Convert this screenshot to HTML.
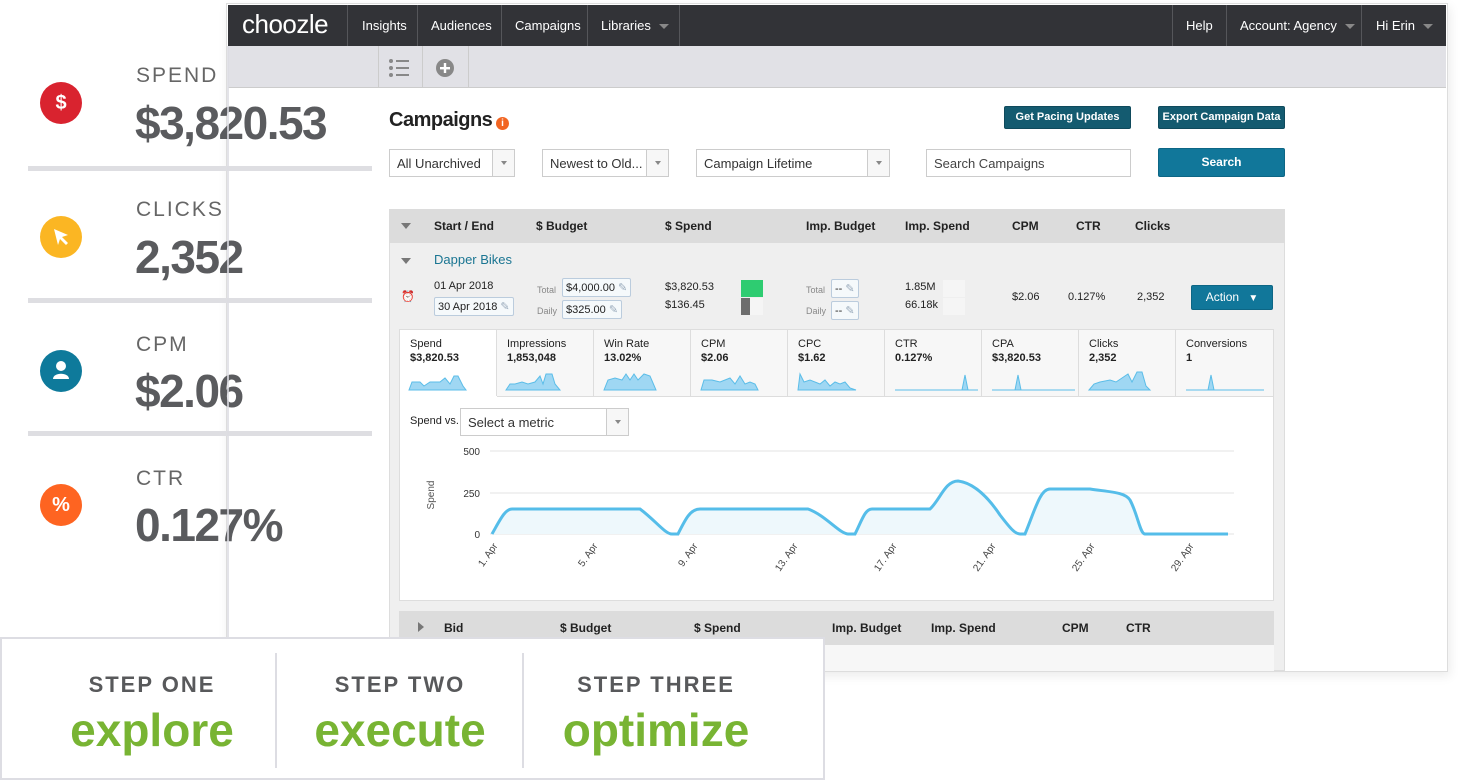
<!DOCTYPE html>
<html><head><meta charset="utf-8"><style>
*{margin:0;padding:0;box-sizing:border-box}
body{width:1458px;height:781px;background:#fff;position:relative;overflow:hidden;font-family:"Liberation Sans",sans-serif;color:#333}
.a{position:absolute}
.nav{left:228px;top:5px;width:1218px;height:41px;background:#323337;color:#fff;font-size:13px}
.nav .d{position:absolute;top:0;width:1px;height:41px;background:#55565a}
.nav span{position:absolute;top:13px}
.caret{display:inline-block;width:0;height:0;border-left:5px solid transparent;border-right:5px solid transparent;border-top:5px solid #888;vertical-align:middle;margin-left:8px}
.sel{position:absolute;top:149px;height:28px;border:1px solid #ccc;background:#fff;font-size:13px;padding:6px 7px;color:#333}
.sel i{position:absolute;right:0;top:0;width:22px;height:26px;border-left:1px solid #ccc;background:#f7f7f7}
.sel i:after{content:"";position:absolute;left:8px;top:11px;border-left:3px solid transparent;border-right:3px solid transparent;border-top:4px solid #888}
.btn{position:absolute;background:#145b70;color:#fff;font-size:11px;font-weight:bold;text-align:center;border-radius:2px;border:1px solid #0f4a5c}
.th{font-size:12px;font-weight:bold;color:#222;position:absolute}
.tri{position:absolute;width:0;height:0;border-left:5px solid transparent;border-right:5px solid transparent;border-top:6px solid #777}
.sm{font-size:11px;color:#222;position:absolute}
.tile{position:absolute;top:330px;width:97px;height:66px;background:#f7f7f7;border-right:1px solid #ddd;font-size:11px;color:#222;padding:8px 10px}
.tile b{display:block;margin-top:2px}
.lab{position:absolute;left:136px;font-size:21px;letter-spacing:2px;color:#666}
.val{position:absolute;left:135px;font-size:46px;font-weight:bold;color:#5a5b5e;letter-spacing:-1.5px}
.hr{position:absolute;left:28px;width:344px;height:5px;background:#dedee2}
.ic{position:absolute;left:40px;width:42px;height:42px;border-radius:50%;color:#fff;text-align:center;font-weight:bold}
.step{position:absolute;top:672px;width:230px;text-align:center;font-size:22px;font-weight:bold;letter-spacing:2px;color:#58595b}
.big{position:absolute;top:703px;width:250px;text-align:center;font-size:46px;font-weight:bold;color:#78b433}
</style></head><body>
<div class="a" style="left:226px;top:3px;width:1222px;height:669px;border:1px solid #ddd;box-shadow:2px 4px 10px rgba(0,0,0,.08);background:#fff"></div>
<div class="a nav">
 <span style="left:14px;top:4px;font-size:26px;letter-spacing:-0.5px">choozle</span>
 <div class="d" style="left:119px"></div><span style="left:134px">Insights</span>
 <div class="d" style="left:189px"></div><span style="left:203px">Audiences</span>
 <div class="d" style="left:273px"></div><span style="left:287px">Campaigns</span>
 <div class="d" style="left:359px"></div><span style="left:373px">Libraries<i class="caret"></i></span>
 <div class="d" style="left:451px"></div>
 <div class="d" style="left:944px"></div><span style="left:958px">Help</span>
 <div class="d" style="left:998px"></div><span style="left:1012px">Account: Agency<i class="caret"></i></span>
 <div class="d" style="left:1133px"></div><span style="left:1148px">Hi Erin<i class="caret"></i></span>
</div>
<div class="a" style="left:228px;top:46px;width:1218px;height:42px;background:#e1e1e6;border-bottom:1px solid #ccc"></div>
<div class="a" style="left:378px;top:46px;width:1px;height:42px;background:#ccc"></div>
<div class="a" style="left:422px;top:46px;width:1px;height:42px;background:#ccc"></div>
<div class="a" style="left:468px;top:46px;width:1px;height:42px;background:#ccc"></div>
<svg class="a" style="left:388px;top:58px" width="22" height="20"><g fill="#888"><circle cx="3" cy="3" r="2"/><circle cx="3" cy="10" r="2"/><circle cx="3" cy="17" r="2"/><rect x="8" y="2" width="13" height="2"/><rect x="8" y="9" width="13" height="2"/><rect x="8" y="16" width="13" height="2"/></g></svg>
<svg class="a" style="left:435px;top:58px" width="20" height="20"><circle cx="10" cy="10" r="9" fill="#888"/><rect x="5" y="9" width="10" height="2.4" fill="#fff"/><rect x="8.8" y="5" width="2.4" height="10" fill="#fff"/></svg>

<div class="a" style="left:389px;top:109px;font-size:20px;font-weight:bold;color:#222;letter-spacing:-0.5px">Campaigns</div>
<div class="a" style="left:496px;top:117px;width:13px;height:13px;border-radius:50%;background:#f26522;color:#fff;font-size:10px;font-weight:bold;text-align:center;line-height:13px">i</div>
<div class="btn" style="left:1004px;top:106px;width:127px;height:23px;line-height:21px">Get Pacing Updates</div>
<div class="btn" style="left:1158px;top:106px;width:127px;height:23px;line-height:21px">Export Campaign Data</div>
<div class="sel" style="left:389px;width:126px">All Unarchived<i></i></div>
<div class="sel" style="left:542px;width:127px">Newest to Old...<i></i></div>
<div class="sel" style="left:696px;width:194px">Campaign Lifetime<i></i></div>
<div class="sel" style="left:926px;width:205px;color:#444">Search Campaigns</div>
<div class="btn" style="left:1158px;top:148px;width:127px;height:29px;line-height:27px;background:#11779a;border-color:#0d6685;font-size:12px">Search</div>

<div class="a" style="left:389px;top:209px;width:896px;height:462px;background:#efefef;border:1px solid #ddd"></div>
<div class="a" style="left:389px;top:209px;width:896px;height:34px;background:#dcdcdc"></div>
<div class="tri" style="left:401px;top:223px"></div>
<div class="th" style="left:434px;top:219px">Start / End</div>
<div class="th" style="left:536px;top:219px">$ Budget</div>
<div class="th" style="left:665px;top:219px">$ Spend</div>
<div class="th" style="left:806px;top:219px">Imp. Budget</div>
<div class="th" style="left:905px;top:219px">Imp. Spend</div>
<div class="th" style="left:1012px;top:219px">CPM</div>
<div class="th" style="left:1076px;top:219px">CTR</div>
<div class="th" style="left:1135px;top:219px">Clicks</div>
<div class="tri" style="left:401px;top:258px"></div>
<div class="a" style="left:434px;top:252px;font-size:13px;color:#1a7592">Dapper Bikes</div>
<div class="a" style="left:401px;top:290px;color:#d9262c;font-size:11px">⏰</div>
<div class="sm" style="left:434px;top:280px">01 Apr 2018</div>
<div class="sm" style="left:434px;top:297px;border:1px solid #bcd;background:#f5f9fb;padding:2px 3px;border-radius:2px">30 Apr 2018 <span style="color:#9ab">✎</span></div>
<div class="sm" style="left:537px;top:285px;font-size:9px;color:#888">Total</div>
<div class="sm" style="left:537px;top:306px;font-size:9px;color:#888">Daily</div>
<div class="sm" style="left:562px;top:278px;border:1px solid #bcd;background:#f5f9fb;padding:2px 3px;border-radius:2px">$4,000.00 <span style="color:#9ab">✎</span></div>
<div class="sm" style="left:562px;top:300px;border:1px solid #bcd;background:#f5f9fb;padding:2px 3px;border-radius:2px">$325.00 <span style="color:#9ab">✎</span></div>
<div class="sm" style="left:665px;top:281px">$3,820.53</div>
<div class="sm" style="left:665px;top:299px">$136.45</div>
<div class="a" style="left:741px;top:280px;width:22px;height:17px;background:#2ecc71"></div>
<div class="a" style="left:741px;top:298px;width:22px;height:17px;background:#f5f5f5"></div>
<div class="a" style="left:741px;top:298px;width:9px;height:17px;background:#6d6d6d"></div>
<div class="sm" style="left:806px;top:285px;font-size:9px;color:#888">Total</div>
<div class="sm" style="left:806px;top:306px;font-size:9px;color:#888">Daily</div>
<div class="sm" style="left:831px;top:279px;border:1px solid #bcd;background:#f5f9fb;padding:2px 3px;border-radius:2px">-- <span style="color:#9ab">✎</span></div>
<div class="sm" style="left:831px;top:301px;border:1px solid #bcd;background:#f5f9fb;padding:2px 3px;border-radius:2px">-- <span style="color:#9ab">✎</span></div>
<div class="sm" style="left:905px;top:281px">1.85M</div>
<div class="sm" style="left:905px;top:299px">66.18k</div>
<div class="a" style="left:943px;top:280px;width:22px;height:17px;background:#f5f5f5"></div>
<div class="a" style="left:943px;top:298px;width:22px;height:17px;background:#f5f5f5"></div>
<div class="sm" style="left:1012px;top:291px">$2.06</div>
<div class="sm" style="left:1068px;top:291px">0.127%</div>
<div class="sm" style="left:1137px;top:291px">2,352</div>
<div class="btn" style="left:1191px;top:285px;width:82px;height:25px;line-height:23px;background:#11779a;border-color:#0d6685;font-size:12px;font-weight:normal">Action <span style="font-size:10px;margin-left:6px">▼</span></div>

<div class="a" style="left:399px;top:329px;width:875px;height:272px;border:1px solid #ddd;background:#fff"></div>
<div class="tile" style="left:400px;background:#fff">Spend<b>$3,820.53</b></div>
<div class="tile" style="left:497px">Impressions<b>1,853,048</b></div>
<div class="tile" style="left:594px">Win Rate<b>13.02%</b></div>
<div class="tile" style="left:691px">CPM<b>$2.06</b></div>
<div class="tile" style="left:788px">CPC<b>$1.62</b></div>
<div class="tile" style="left:885px">CTR<b>0.127%</b></div>
<div class="tile" style="left:982px">CPA<b>$3,820.53</b></div>
<div class="tile" style="left:1079px">Clicks<b>2,352</b></div>
<div class="tile" style="left:1176px;width:97px;border-right:none">Conversions<b>1</b></div>
<div class="a" style="left:497px;top:396px;width:777px;height:1px;background:#ddd"></div>
<svg class="a" style="left:400px;top:370px" width="874" height="22">
<g fill="#9fd7f3" stroke="#5bbde8" stroke-width="1">
<path d="M9,20 L12,12 L20,12 L24,16 L30,12 L40,12 L45,8 L50,14 L54,6 L58,6 L63,16 L66,20Z"/>
<path d="M106,20 L110,14 L115,14 L122,12 L128,14 L135,12 L140,6 L143,14 L146,4 L152,4 L155,14 L160,20Z"/>
<path d="M204,20 L208,10 L215,8 L222,10 L226,4 L230,10 L234,4 L238,10 L244,4 L250,6 L256,20Z"/>
<path d="M301,20 L304,10 L312,10 L320,12 L330,8 L335,14 L340,6 L345,14 L350,12 L355,14 L358,20Z"/>
<path d="M398,20 L400,4 L404,12 L410,10 L420,14 L425,10 L430,16 L435,12 L440,14 L445,12 L450,18 L456,20Z"/>
<path d="M495,20 L562,20 L565,5 L568,20 L578,20Z"/>
<path d="M592,20 L615,20 L618,5 L621,20 L675,20Z"/>
<path d="M689,20 L694,14 L700,12 L710,10 L716,12 L722,8 L728,4 L732,12 L737,2 L742,2 L746,16 L750,20Z"/>
<path d="M786,20 L808,20 L811,5 L814,20 L864,20Z"/>
</g></svg>

<div class="a" style="left:410px;top:415px;font-size:11px;color:#222">Spend vs.</div>
<div class="sel" style="left:460px;top:408px;width:169px;height:28px">Select a metric<i></i></div>
<svg class="a" style="left:400px;top:440px" width="874" height="160">
<g stroke="#e3e3e3" stroke-width="1"><line x1="90" y1="11" x2="834" y2="11"/><line x1="90" y1="53" x2="834" y2="53"/><line x1="90" y1="94" x2="834" y2="94"/></g>
<g font-family="Liberation Sans" font-size="10" fill="#333" text-anchor="end"><text x="80" y="15">500</text><text x="80" y="57">250</text><text x="80" y="98">0</text></g>
<text x="34" y="55" font-family="Liberation Sans" font-size="10" fill="#555" transform="rotate(-90 34 55)" text-anchor="middle">Spend</text>
<path d="M92,94 C100,80 105,69 112,69 L240,69 C255,80 265,94 272,94 L278,94 C285,80 290,69 300,69 L408,69 C425,75 440,94 448,94 L455,94 C462,80 465,69 472,69 L530,69 C540,60 545,41 558,41 C575,43 590,60 600,75 C610,88 615,94 620,94 L625,94 C635,70 640,49 650,49 L690,49 C710,52 725,52 730,60 C738,75 740,94 745,94 L828,94 L92,94Z" fill="#eef8fc"/>
<path d="M92,94 C100,80 105,69 112,69 L240,69 C255,80 265,94 272,94 L278,94 C285,80 290,69 300,69 L408,69 C425,75 440,94 448,94 L455,94 C462,80 465,69 472,69 L530,69 C540,60 545,41 558,41 C575,43 590,60 600,75 C610,88 615,94 620,94 L625,94 C635,70 640,49 650,49 L690,49 C710,52 725,52 730,60 C738,75 740,94 745,94 L828,94" fill="none" stroke="#55bde9" stroke-width="3"/>
<g font-family="Liberation Sans" font-size="10" fill="#444" text-anchor="end">
<text transform="translate(98,106) rotate(-55)">1. Apr</text>
<text transform="translate(198,106) rotate(-55)">5. Apr</text>
<text transform="translate(298,106) rotate(-55)">9. Apr</text>
<text transform="translate(398,106) rotate(-55)">13. Apr</text>
<text transform="translate(497,106) rotate(-55)">17. Apr</text>
<text transform="translate(596,106) rotate(-55)">21. Apr</text>
<text transform="translate(695,106) rotate(-55)">25. Apr</text>
<text transform="translate(794,106) rotate(-55)">29. Apr</text>
</g></svg>
<div class="a" style="left:399px;top:611px;width:875px;height:34px;background:#dcdcdc"></div>
<div class="a" style="left:418px;top:622px;border-top:5px solid transparent;border-bottom:5px solid transparent;border-left:6px solid #777"></div>
<div class="th" style="left:444px;top:621px">Bid</div>
<div class="th" style="left:560px;top:621px">$ Budget</div>
<div class="th" style="left:694px;top:621px">$ Spend</div>
<div class="th" style="left:832px;top:621px">Imp. Budget</div>
<div class="th" style="left:931px;top:621px">Imp. Spend</div>
<div class="th" style="left:1062px;top:621px">CPM</div>
<div class="th" style="left:1126px;top:621px">CTR</div>
<div class="a" style="left:399px;top:645px;width:875px;height:26px;background:#f7f7f7"></div>

<div class="ic" style="top:82px;background:#d9232f;font-size:20px;line-height:42px">$</div>
<div class="lab" style="top:64px">SPEND</div>
<div class="val" style="top:96px">$3,820.53</div>
<div class="hr" style="top:166px"></div>
<div class="ic" style="top:216px;background:#fbb623"><svg width="42" height="42"><path d="M14,13 L28,19 L22,21 L28,27 L26,29 L20,23 L18,29Z" fill="#fff"/></svg></div>
<div class="lab" style="top:198px">CLICKS</div>
<div class="val" style="top:230px">2,352</div>
<div class="hr" style="top:298px"></div>
<div class="ic" style="top:350px;background:#0e7a9b"><svg width="42" height="42"><circle cx="21" cy="16" r="5" fill="#fff"/><path d="M13,29 C13,22 29,22 29,29Z" fill="#fff"/></svg></div>
<div class="lab" style="top:333px">CPM</div>
<div class="val" style="top:364px">$2.06</div>
<div class="hr" style="top:431px"></div>
<div class="ic" style="top:484px;background:#fe6421;font-size:20px;line-height:42px">%</div>
<div class="lab" style="top:467px">CTR</div>
<div class="val" style="top:498px">0.127%</div>
<div class="a" style="left:227px;top:46px;width:2px;height:592px;background:#dcdce2;opacity:.8"></div>

<div class="a" style="left:0;top:637px;width:825px;height:143px;background:#fff;border:2px solid #dddde3"></div>
<div class="a" style="left:275px;top:653px;width:2px;height:115px;background:#dddde3"></div>
<div class="a" style="left:522px;top:653px;width:2px;height:115px;background:#dddde3"></div>
<div class="step" style="left:37px">STEP ONE</div>
<div class="step" style="left:285px">STEP TWO</div>
<div class="step" style="left:541px">STEP THREE</div>
<div class="big" style="left:27px">explore</div>
<div class="big" style="left:275px">execute</div>
<div class="big" style="left:531px">optimize</div>
</body></html>
